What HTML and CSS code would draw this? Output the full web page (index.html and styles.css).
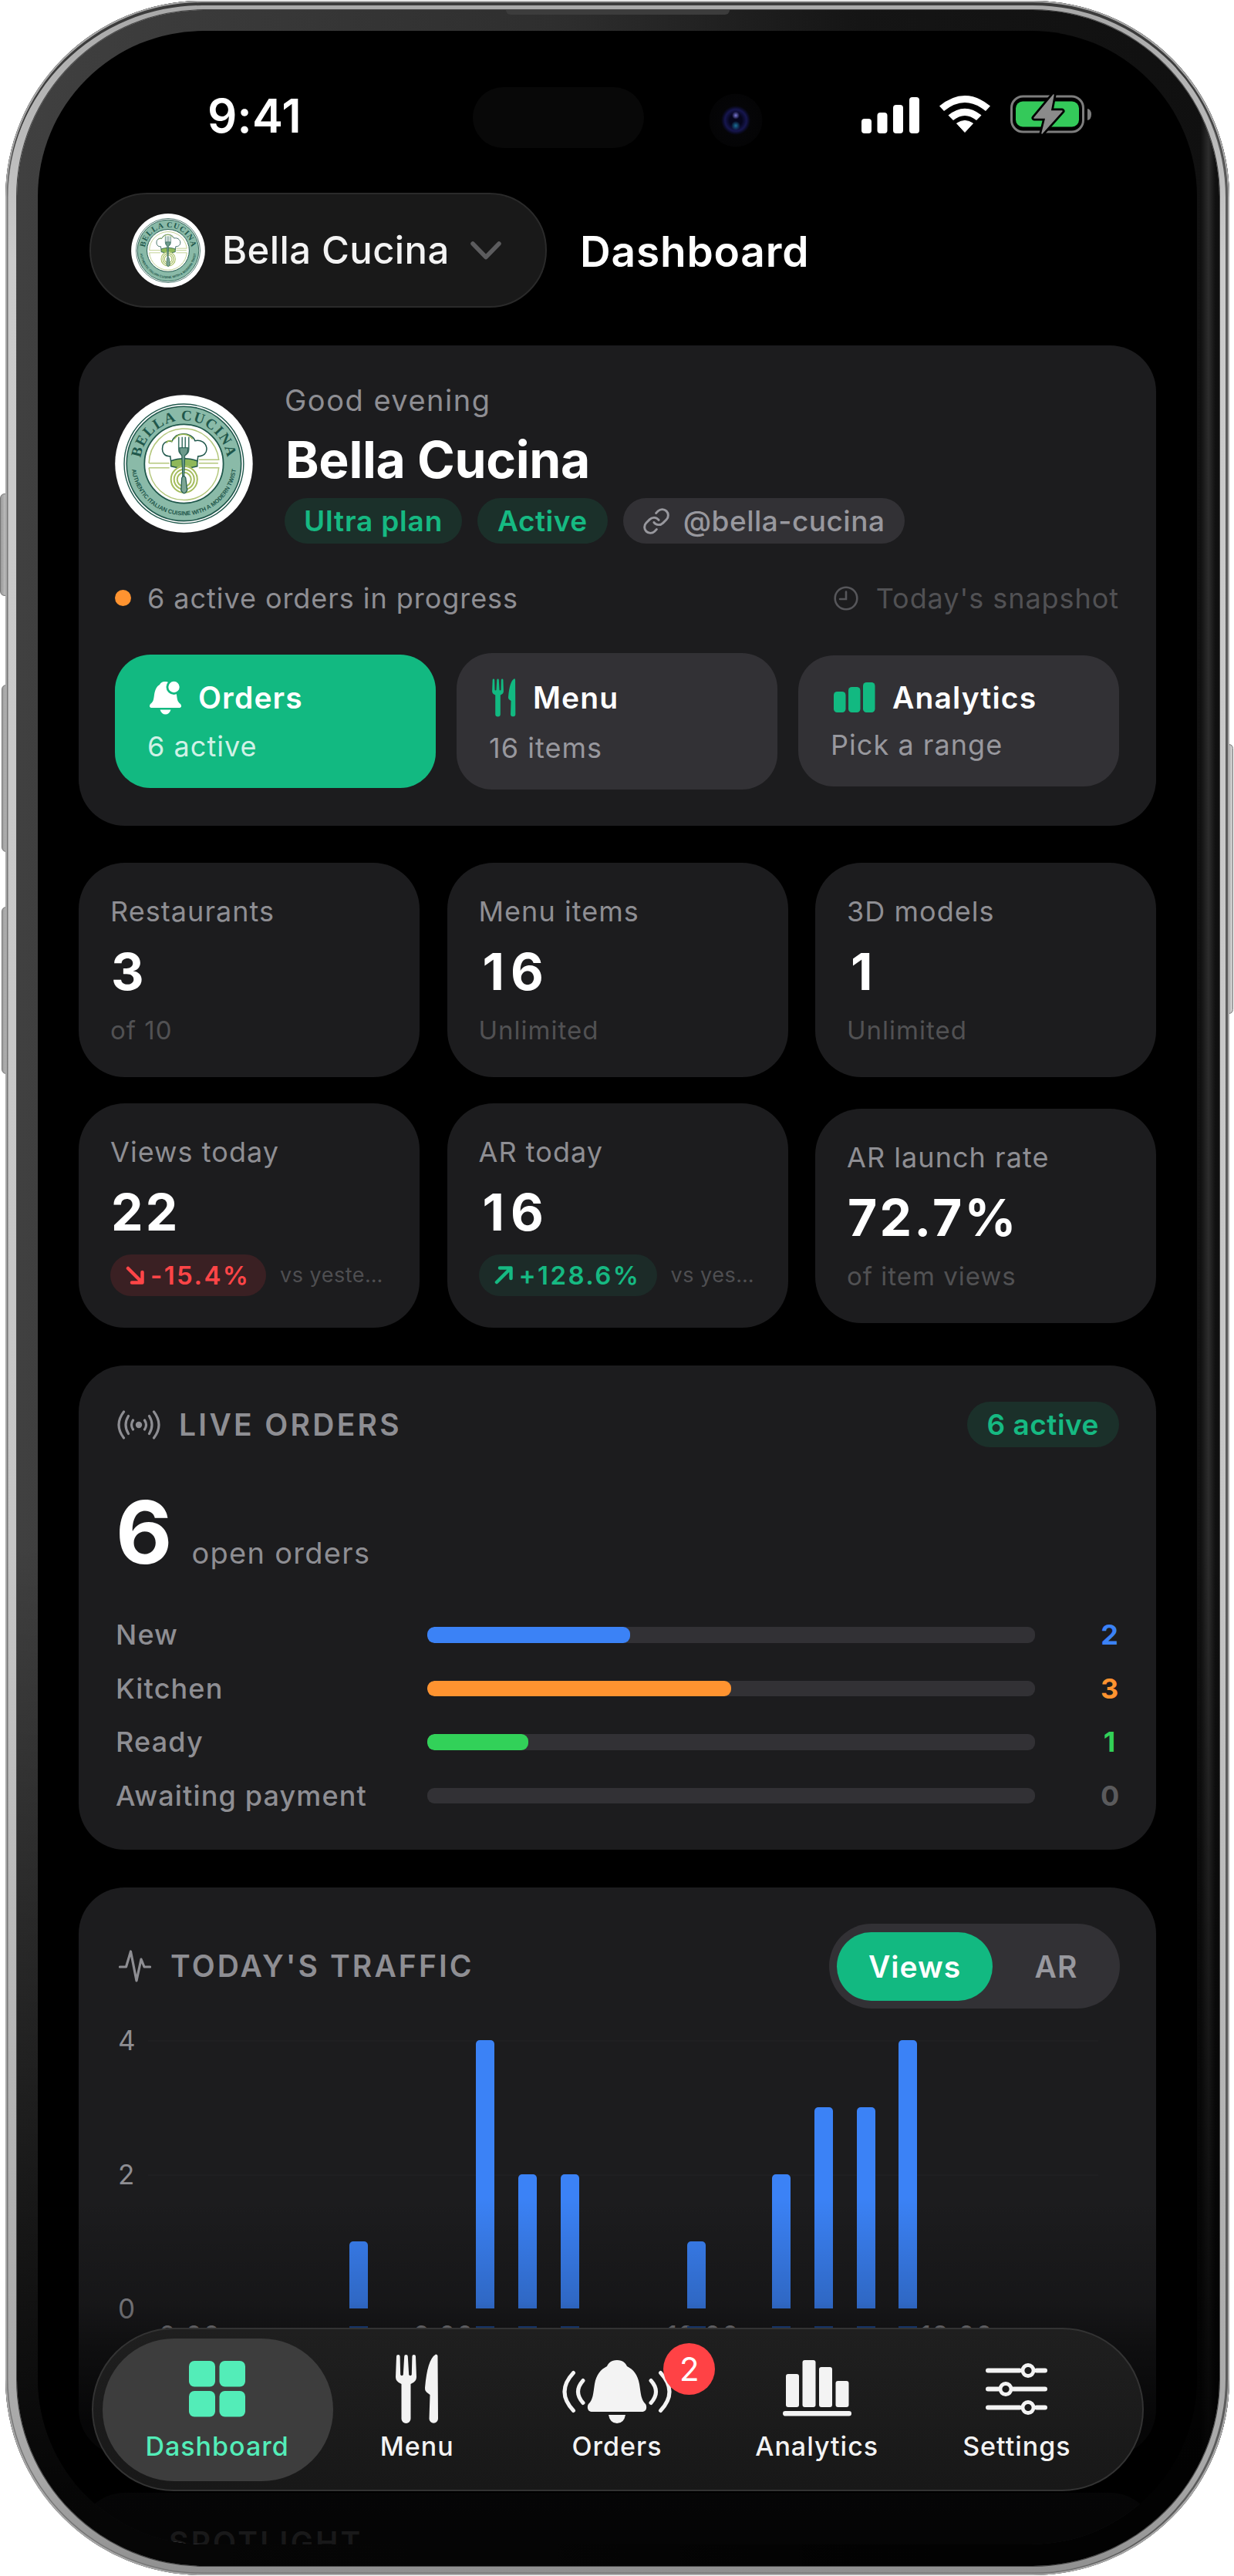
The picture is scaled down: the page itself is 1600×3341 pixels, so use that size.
FILE: index.html
```html
<!DOCTYPE html>
<html lang="en">
<head>
<meta charset="utf-8">
<title>Bella Cucina – Dashboard</title>
<link rel="stylesheet" href="styles.css">
</head>
<body>
<svg class="defs" aria-hidden="true">
  <defs>
    <path id="arc-top" d="M42.8 94A56.5 56.5 0 0 1 154.600 94"/>
    <path id="arc-bottom" d="M31.5 109A67.7 67.7 0 0 0 165.9 109"/>
    <symbol id="crest" viewBox="9.5 12.5 178.5 178.5">
      <circle cx="98.7" cy="101.7" r="89" fill="#fff"/>
      <circle cx="98.7" cy="101.7" r="77.2" fill="none" stroke="#1f574b" stroke-width="1.4"/>
      <circle cx="98.7" cy="101.7" r="74" fill="#8abaa8" stroke="#1f574b" stroke-width="1.6"/>
      <circle cx="98.7" cy="101.7" r="51" fill="#fff" stroke="#1f574b" stroke-width="1.8"/>
      <g fill="none" stroke="#b4c77c" stroke-width="1.5">
        <path d="M53.5 101A45.3 45.3 0 0 1 143.8 96.5H118M53.5 101H80M53.5 107A45.3 45.3 0 0 0 143.8 107H118M53.5 107H80M118 101H143"/>
      </g>
      <path d="M82 99l-1-7c-7 1-11-5-10-11 0-6 6-10 12-8 3-7 9-10 15-10s13 3 15 9c8-2 14 3 15 9 1 7-4 11-11 11l-1 7z" fill="#fff" stroke="#1f574b" stroke-width="1.5"/>
      <path d="M76 75c3-5 6-3 8-2M86 70c5-8 18-9 24 0" fill="none" stroke="#9dbb55" stroke-width="1.6"/>
      <path d="M82 98c10-4 24-4 34 0v7c-10 3-24 3-34 0z" fill="#8fb85a" stroke="#1f574b" stroke-width="1.4"/>
      <circle cx="99" cy="122" r="18" fill="#fff"/>
      <g fill="none" stroke="#a5bd5e" stroke-width="2">
        <circle cx="99" cy="122" r="17"/><circle cx="99" cy="122" r="13"/><circle cx="99" cy="122" r="9"/>
      </g>
      <path d="M92 67v16q0 6 6.500 8 6.500-2 6.500-8V67M96.500 67v15M100.500 67v15" fill="none" stroke="#44786b" stroke-width="1.600"/>
      <path d="M93 81h11q0 8-4 10l-1 27h-2l-1-27q-3-2-3-10z" fill="#6c9a8b" stroke="#1f574b" stroke-width="1"/>
      <path d="M96 120q2.500-5 5 0l2 16q-4 8-8 0z" fill="#7ea694" stroke="#1f574b" stroke-width="1.200"/>
      <text class="crest-name"><textPath href="#arc-top" textLength="160">BELLA CUCINA</textPath></text>
      <text class="crest-motto"><textPath href="#arc-bottom" textLength="196">AUTHENTIC ITALIAN CUISINE WITH A MODERN TWIST</textPath></text>
    </symbol>
    <symbol id="cutlery" viewBox="0 0 56 91">
      <path d="M1 3.200A2.300 2.300 0 0 1 5.600 3.200L6.200 27A2 2 0 0 0 9.800 27L11.200 3.200A2.300 2.300 0 0 1 15.800 3.200L17.200 27A2 2 0 0 0 20.800 27L21.400 3.200A2.300 2.300 0 0 1 26 3.200L27 30Q27 36 19.500 39V84A6 6 0 0 1 7.500 84V39Q0 36 0 30Z"/>
      <path d="M54.500 3Q54.500 .5 52 .5Q41 7 38 44Q37.500 47 40 49.500L44.500 53L43.500 84A5.700 5.700 0 0 0 55 84Z"/>
    </symbol>
  </defs>
</svg>

<div class="device">
  <i class="side-key key-action"></i>
  <i class="side-key key-up"></i>
  <i class="side-key key-down"></i>
  <i class="side-key key-power"></i>
  <div class="frame">
    <div class="bezel">
      <i class="earpiece"></i>
      <main class="screen">

        <div class="status-bar">
          <span class="time">9:41</span>
          <span class="island"></span>
          <span class="camera"></span>
          <svg class="signal" viewBox="0 0 75 48" width="75" height="48" fill="#fff">
            <rect x="0" y="29" width="13" height="19" rx="4"/><rect x="20.500" y="21" width="13" height="27" rx="4"/>
            <rect x="41" y="11" width="13" height="37" rx="4"/><rect x="62" y="1" width="13" height="47" rx="4"/>
          </svg>
          <svg class="wifi" viewBox="0 0 66 48" width="66" height="48" fill="#fff">
            <path d="M0 13.500Q33-13.500 66 13.500L60 20Q33-2 6 20Z"/>
            <path d="M11.500 25.500Q33 8 54.500 25.500L48 32Q33 20 18 32Z"/>
            <path d="M22.500 36Q33 29 43.500 36L33 47.500Z" stroke="#fff" stroke-linejoin="round"/>
          </svg>
          <svg class="battery" viewBox="0 0 106 52" width="106" height="52">
            <rect x="1.500" y="3" width="93" height="46" rx="15" fill="none" stroke="#7d7d7d" stroke-width="3"/>
            <path d="M100 19q5 1 5 7.500t-5 7.500z" fill="#7d7d7d"/>
            <rect x="7" y="9.500" width="82" height="33" rx="9" fill="#34c95a"/>
            <path d="M56 1L31 31h15l-5 20 26-29H52z" fill="#8b8b8b" stroke="#000" stroke-width="7" stroke-linejoin="round"/>
            <path d="M56 1L31 31h15l-5 20 26-29H52z" fill="#8b8b8b" stroke="#8b8b8b" stroke-width="1.500" stroke-linejoin="round"/>
          </svg>
        </div>

        <header class="top-bar">
          <button class="switcher">
            <svg class="switcher-logo"><use href="#crest"/></svg>
            <span class="switcher-name">Bella Cucina</span>
            <svg class="chevron" viewBox="0 0 40 24" width="40" height="24"><path d="M3 3L20 20.500L37 3" fill="none" stroke="#5c5c5e" stroke-width="5.500" stroke-linecap="round" stroke-linejoin="round"/></svg>
          </button>
          <h1 class="page-title">Dashboard</h1>
        </header>

        <section class="card hero">
          <div class="identity">
            <svg class="hero-logo"><use href="#crest"/></svg>
            <div class="identity-text">
              <p class="greeting">Good evening</p>
              <h2 class="name">Bella Cucina</h2>
              <div class="tags">
                <span class="tag green plan">Ultra plan</span>
                <span class="tag green">Active</span>
                <span class="tag grey">
                  <svg viewBox="1 1 22 22" width="34" height="34" fill="none" stroke="#98989e" stroke-width="1.900" stroke-linecap="round" stroke-linejoin="round">
                    <path d="M10 13a5 5 0 0 0 7.540.540l3-3a5 5 0 0 0-7.070-7.070l-1.720 1.710"/>
                    <path d="M14 11a5 5 0 0 0-7.540-.540l-3 3a5 5 0 0 0 7.070 7.070l1.710-1.710"/>
                  </svg>
                  <span class="handle">@bella-cucina</span>
                </span>
              </div>
            </div>
          </div>
          <div class="summary">
            <i class="dot"></i>
            <span class="summary-text">6 active orders in progress</span>
            <svg class="clock" viewBox="0 0 32 32" width="32" height="32" fill="none" stroke="#56565a" stroke-width="2.600" stroke-linecap="round"><circle cx="16" cy="16" r="14.300"/><path d="M16 7.500V17H8"/></svg>
            <span class="snapshot">Today's snapshot</span>
          </div>
          <div class="actions">
            <div class="action primary">
              <div class="action-head head-orders">
                <svg viewBox="0 0 41 44" width="41" height="44" fill="#fff">
                  <path d="M20 1c4 0 6 2 7 4 5 2 7 7 8 13 1 7 1 9 5 12 2 3 1 5-2 5H3c-3 0-4-2-2-5 4-3 4-5 5-12 1-6 3-11 7-13 1-2 3-4 7-4z"/>
                  <path d="M13.500 37.500h14q-2 6-7 6t-7-6z"/>
                  <circle cx="31.500" cy="8" r="10" fill="#12b981"/><circle cx="31.500" cy="8" r="7.200"/>
                </svg>
                <span>Orders</span>
              </div>
              <p class="action-sub">6 active</p>
            </div>
            <div class="action">
              <div class="action-head head-menu">
                <svg width="31" height="50" fill="#12b981"><use href="#cutlery"/></svg>
                <span>Menu</span>
              </div>
              <p class="action-sub">16 items</p>
            </div>
            <div class="action">
              <div class="action-head head-analytics">
                <svg viewBox="0 0 54 39" width="54" height="39" fill="#12b981"><rect y="12" width="15.500" height="27" rx="4.500"/><rect x="19" y="6" width="15.500" height="33" rx="4.500"/><rect x="38" width="15.500" height="39" rx="4.500"/></svg>
                <span>Analytics</span>
              </div>
              <p class="action-sub">Pick a range</p>
            </div>
          </div>
        </section>

        <section class="stats">
          <div class="card stat"><p class="stat-label">Restaurants</p><p class="stat-value">3</p><p class="stat-sub">of 10</p></div>
          <div class="card stat"><p class="stat-label">Menu items</p><p class="stat-value inset">16</p><p class="stat-sub">Unlimited</p></div>
          <div class="card stat"><p class="stat-label">3D models</p><p class="stat-value inset">1</p><p class="stat-sub">Unlimited</p></div>
          <div class="card stat">
            <p class="stat-label">Views today</p><p class="stat-value">22</p>
            <div class="trend">
              <span class="delta down"><svg viewBox="0 0 24 24" width="24" height="24"><path d="M3 3L21 21M8 21.500H21.500V8"/></svg>-15.4%</span>
              <span class="versus">vs yeste…</span>
            </div>
          </div>
          <div class="card stat">
            <p class="stat-label">AR today</p><p class="stat-value inset">16</p>
            <div class="trend">
              <span class="delta up"><svg viewBox="0 0 24 24" width="24" height="24"><path d="M3 21L21 3M7 2.500H21.500V16"/></svg>+128.6%</span>
              <span class="versus">vs yes…</span>
            </div>
          </div>
          <div class="card stat"><p class="stat-label">AR launch rate</p><p class="stat-value">72.7%</p><p class="stat-sub">of item views</p></div>
        </section>

        <section class="card live">
          <div class="card-head">
            <svg viewBox="0 0 56 38" width="56" height="38" fill="none" stroke="#8e8e93" stroke-width="3.200" stroke-linecap="round">
              <circle cx="28" cy="19" r="4.200" fill="#8e8e93" stroke="none"/>
              <path d="M20.500 13q-4 6 0 12M14.500 7.500q-7 11.500 0 23M8.500 2q-13 17 0 34M35.500 13q4 6 0 12M41.500 7.500q7 11.500 0 23M47.500 2q13 17 0 34"/>
            </svg>
            <h3 class="card-title">LIVE ORDERS</h3>
            <span class="tag green live-tag">6 active</span>
          </div>
          <div class="open"><span class="open-count">6</span><span class="open-label">open orders</span></div>
          <div class="stages">
            <div class="stage"><span class="stage-name">New</span><div class="track"><div class="fill blue" style="width:33.33%"></div></div><span class="stage-count c-blue">2</span></div>
            <div class="stage"><span class="stage-name">Kitchen</span><div class="track"><div class="fill orange" style="width:50%"></div></div><span class="stage-count c-orange">3</span></div>
            <div class="stage"><span class="stage-name">Ready</span><div class="track"><div class="fill lime" style="width:16.67%"></div></div><span class="stage-count c-lime">1</span></div>
            <div class="stage"><span class="stage-name">Awaiting payment</span><div class="track"></div><span class="stage-count c-none">0</span></div>
          </div>
        </section>

        <section class="card traffic">
          <div class="card-head">
            <svg viewBox="0 0 42 44" width="42" height="44" fill="none" stroke="#8e8e93" stroke-width="3.200" stroke-linecap="round" stroke-linejoin="round"><path d="M1.500 23H9.500L15.500 3L23 41L29 13L33 23H40.500"/></svg>
            <h3 class="card-title traffic-title">TODAY'S TRAFFIC</h3>
            <div class="toggle"><span class="option selected">Views</span><span class="option">AR</span></div>
          </div>
          <div class="chart">
            <div class="y-axis"><span>4</span><span>2</span><span>0</span></div>
            <div class="plot">
              <i></i><i></i><i></i><i></i><i></i>
              <b style="height:25%"></b><i></i><i></i>
              <b style="height:100%"></b><b style="height:50%"></b><b style="height:50%"></b><i></i><i></i>
              <b style="height:25%"></b><i></i>
              <b style="height:50%"></b><b style="height:75%"></b><b style="height:75%"></b><b style="height:100%"></b>
            </div>
          </div>
          <div class="x-axis"><span>0:00</span><span>6:00</span><span>12:00</span><span>18:00</span></div>
        </section>

        <section class="card spotlight"><h3 class="card-title">SPOTLIGHT</h3></section>

        <div class="scrim"></div>

        <nav class="tab-bar">
          <a class="tab active">
            <svg viewBox="0 0 73 73" width="73" height="91" fill="#53edb8"><rect width="34" height="33.500" rx="7"/><rect x="39.500" width="33.500" height="33.500" rx="7"/><rect y="39" width="34" height="33.500" rx="7"/><rect x="39.500" y="39" width="33.500" height="33.500" rx="7"/></svg>
            <span>Dashboard</span>
          </a>
          <a class="tab">
            <svg width="56" height="91" fill="#f3f3f3"><use href="#cutlery"/></svg>
            <span>Menu</span>
          </a>
          <a class="tab">
            <svg viewBox="0 -8 142 91" width="142" height="91" fill="#f3f3f3">
              <path d="M71 0c8 0 11 4 13 8 8 4 14 11 16 23 2 13 2 20 8 26 2 3 2 10-5 10H39c-7 0-7-7-5-10 6-6 6-13 8-26 2-12 8-19 16-23 2-4 5-8 13-8z"/>
              <path d="M60 71h22q-2 11-11 11t-11-11z"/>
              <path d="M14.500 16.500q-23 24.500 0 49M27 26.500q-13 14.500 0 29M127.500 16.500q23 24.500 0 49M115 26.500q13 14.500 0 29" fill="none" stroke="#f3f3f3" stroke-width="5" stroke-linecap="round"/>
            </svg>
            <span>Orders</span>
            <em class="badge">2</em>
          </a>
          <a class="tab">
            <svg viewBox="0 0 89 75" width="89" height="91" fill="#f3f3f3"><rect x="4" y="18" width="17" height="43" rx="3"/><rect x="25.500" width="17" height="61" rx="3"/><rect x="47" y="9" width="17" height="52" rx="3"/><rect x="68.500" y="27" width="17" height="34" rx="3"/><rect y="66" width="89" height="6.500" rx="3.200"/></svg>
            <span>Analytics</span>
          </a>
          <a class="tab">
            <svg viewBox="0 0 80 70" width="80" height="91" fill="none" stroke="#f3f3f3" stroke-width="6" stroke-linecap="round"><path d="M3 11H44M66 11H77M3 35H16M36 35H77M3 59H44M66 59H77"/><g stroke-width="4.800"><circle cx="55" cy="11" r="7"/><circle cx="26" cy="35" r="7"/><circle cx="55" cy="59" r="7"/></g></svg>
            <span>Settings</span>
          </a>
        </nav>
      </main>
    </div>
  </div>
</div>
</body>
</html>
```
FILE: styles.css
```css
* { box-sizing: border-box; margin: 0; padding: 0; }

body {
  width: 1600px;
  background: #fff;
  color: #fff;
  font-family: Inter, "Liberation Sans", sans-serif;
}

h1, h2, h3 { font-weight: 600; }
svg { display: block; flex: none; }
.defs { position: absolute; width: 0; height: 0; }
.crest-name { font: 700 19px "Liberation Serif", serif; fill: #1f574b; }
.crest-motto { font: 600 7.6px "Liberation Sans", sans-serif; fill: #1f574b; }

/* Device shell */
.device { position: relative; height: 3341px; padding: 1px 6px 1px 7px; overflow: hidden; }
.frame {
  position: relative;
  height: 3339px;
  padding: 12px 13px 12px 15px;
  border-radius: 255px;
  background: linear-gradient(180deg, #a8a8a8 0, #cbcbcb 10%, #c6c6c6 60%, #a8a8a8 96%, #8f8f8f);
  box-shadow:
    inset 0 0 0 2px #a9a9a9,
    inset 0 4px 0 2px #3c3c3c,
    inset -3px 0 0 2px #5c5c5c,
    inset 0 0 0 3.500px #777;
}
.bezel {
  position: relative;
  height: 3315px;
  padding: 27px 29px 28px 27px;
  border-radius: 242px;
  background:
    linear-gradient(180deg, transparent 60%, rgba(0, 0, 0, .9) 97%),
    linear-gradient(90deg, transparent calc(100% - 24px), #2d2d2d calc(100% - 14px), transparent calc(100% - 5px)),
    linear-gradient(90deg, #404040 0, #2e2e2e 45%, #151515 70%, #101010);
  box-shadow: 0 0 0 1px #444;
}
.earpiece {
  position: absolute; top: 0; left: 634px; width: 290px; height: 6px;
  background: #3c3c3c; border-radius: 0 0 8px 8px;
}
.side-key { position: absolute; background: linear-gradient(90deg, #9a9a9a, #d2d2d2); border: 1.500px solid #777; border-radius: 6px; }
.key-action { left: 0; top: 640px; width: 12px; height: 133px; }
.key-up { left: 2px; top: 888px; width: 12px; height: 217px; }
.key-down { left: 2px; top: 1176px; width: 12px; height: 217px; }
.key-power { left: 1588px; top: 965px; width: 11px; height: 350px; }

.screen {
  position: relative;
  width: 1503px;
  height: 3260px;
  padding: 0 53px;
  border-radius: 215px;
  background: #000;
  overflow: hidden;
}

/* Status bar */
.status-bar { display: flex; align-items: center; height: 210px; padding: 9px 0 0 167px; }
.time { width: 344px; font-size: 60px; font-weight: 600; letter-spacing: .2px; line-height: 60px; }
.island { width: 222px; height: 79px; margin-top: 6px; border-radius: 40px; background: #080808; }
.camera {
  width: 70px; height: 70px; margin: 13px 0 0 84px; border-radius: 50%;
  background:
    radial-gradient(circle at 50% 41%, #7a78d8 0, transparent 5px),
    radial-gradient(circle at 50% 60%, #1c6f9c 0, transparent 6px),
    radial-gradient(circle, #05051c 8px, #16164e 14px, #0a0a22 17px, #050507 19px, #040405 34px, #000 35px);
}
.signal { margin: -2px 0 0 128px; }
.wifi { margin: -3px 0 0 26px; }
.battery { margin: -4px 0 0 26px; }

/* Header */
.top-bar { display: flex; align-items: center; gap: 43px; padding-left: 14px; height: 149px; }
.switcher {
  display: flex; align-items: center;
  width: 593px; height: 149px; padding-left: 52px;
  border: 2px solid #2a2a2a; border-radius: 75px;
  background: #191919; color: #f3f3f3; font: inherit;
}
.switcher-logo { width: 96px; height: 96px; }
.switcher-name { width: 322px; margin-left: 22px; text-align: left; white-space: nowrap; font-size: 49px; font-weight: 500; letter-spacing: .4px; }
.page-title { font-size: 55px; line-height: 60px; padding-top: 2px; letter-spacing: .8px; }

/* Cards */
.card { border-radius: 60px; background: #1c1c1e; }

.hero { height: 623px; margin-top: 49px; padding: 50.500px 48px 0 47px; }
.identity { display: flex; align-items: center; gap: 41px; }
.hero-logo { width: 179px; height: 179px; }
.greeting { margin-top: -2px; font-size: 38px; line-height: 44px; color: #8e8e93; letter-spacing: 1.500px; }
.name { margin: 15px 0 0 1px; font-size: 66px; line-height: 80px; font-weight: 700; letter-spacing: -.300px; }
.tags { display: flex; gap: 20px; margin-top: 10.500px; }
.tag { display: flex; align-items: center; height: 59px; padding: 0 26px; border-radius: 30px; font-size: 37px; line-height: 59px; white-space: nowrap; letter-spacing: .5px; }
.tag.green { background: #1b302a; color: #16b982; font-weight: 600; }
.tag.plan { letter-spacing: .8px; padding: 0 25px; }
.tag.grey { background: #323135; color: #98989e; font-weight: 500; gap: 18px; }

.summary { display: flex; align-items: center; height: 44px; margin-top: 48.500px; font-size: 36px; color: #8e8e93; letter-spacing: .950px; }
.dot { width: 21px; height: 21px; border-radius: 50%; background: #ff9330; }
.summary-text { margin-left: 21px; }
.clock { margin-left: auto; }
.snapshot { margin-left: 23px; color: #515154; }

.actions { display: flex; align-items: center; gap: 27px; margin-top: 49px; }
.action { flex: 1; padding: 32px 42px; border-radius: 46px; background: #323135; }
.action.primary { background: #12b981; }
.action-head { display: flex; align-items: center; gap: 22px; font-size: 39px; font-weight: 600; letter-spacing: 1.150px; }
.head-orders { height: 48px; padding-left: 3px; }
.head-menu { height: 52px; padding-left: 4px; }
.head-analytics { height: 45px; padding-left: 4px; }
.action-sub { margin-top: 17px; font-size: 36px; line-height: 44px; color: #98989e; letter-spacing: 1.050px; }
.primary .action-sub { color: #d0f1e6; }

/* Stat grid */
.stats { display: grid; grid-template-columns: repeat(3, 442px); justify-content: space-between; align-items: center; row-gap: 34px; margin-top: 48px; }
.stat { padding: 41px; }
.stat-label { font-size: 36px; line-height: 44px; color: #8e8e93; white-space: nowrap; letter-spacing: 1.050px; }
.stat-value { margin-top: 16px; padding-left: 1px; font-size: 66px; line-height: 80px; font-weight: 700; letter-spacing: 3.200px; }
.stat-value.inset { padding-left: 5px; letter-spacing: 8px; }
.stat-sub { margin-top: 16px; font-size: 33px; line-height: 40px; color: #515153; letter-spacing: 1px; }
.trend { display: flex; align-items: center; margin-top: 15px; }
.delta { display: flex; align-items: center; gap: 8px; height: 54px; padding-left: 20px; border-radius: 27px; font-size: 33px; font-weight: 600; white-space: nowrap; letter-spacing: 2.400px; }
.delta path { fill: none; stroke: currentColor; stroke-width: 4.500; stroke-linecap: round; stroke-linejoin: round; }
.delta.down { width: 202px; background: #3a2023; color: #ff4547; }
.delta.up { width: 231px; background: #1c2b28; color: #16b982; }
.versus { margin-left: 18px; font-size: 27px; line-height: 40px; color: #4e4e51; white-space: nowrap; letter-spacing: .500px; }

/* Live orders */
.card-head { display: flex; align-items: center; }
.card-title { font-size: 39px; line-height: 44px; color: #8e8e93; letter-spacing: 3.300px; white-space: nowrap; }
.live { height: 628.500px; margin-top: 48.500px; padding: 47.500px 48px 0 48px; }
.live .card-head svg { margin-left: 2px; }
.live .card-title { margin-left: 24px; }
.live-tag { margin-left: auto; }
.open { display: flex; align-items: baseline; height: 100px; margin-top: 60px; line-height: 100px; }
.open-count { font-size: 113px; font-weight: 700; }
.open-label { margin-left: 25px; font-size: 38px; color: #8e8e93; letter-spacing: 1.300px; }
.stages { display: flex; flex-direction: column; gap: 25.500px; margin-top: 61.500px; }
.stage { display: flex; align-items: center; height: 44px; font-size: 36px; font-weight: 500; }
.stage-name { width: 404px; margin-top: -1px; color: #8e8e93; white-space: nowrap; letter-spacing: 1.150px; }
.track { width: 788px; height: 20.500px; border-radius: 9px; background: #323135; overflow: hidden; }
.fill { height: 100%; border-radius: 9px; }
.stage-count { width: 23px; margin: -1px 1px 0 auto; text-align: center; font-weight: 700; }
.blue { background: #3b82f6; }
.orange { background: #ff9330; }
.lime { background: #32d159; }
.c-blue { color: #3b82f6; }
.c-orange { color: #ff9330; }
.c-lime { color: #32d159; }
.c-none { color: #5a5a5c; }

/* Traffic chart */
.traffic { height: 737px; margin-top: 48.500px; padding: 47.500px 47px 0 50px; }
.traffic .card-head svg { margin-left: 2px; }
.traffic-title { margin-left: 25px; letter-spacing: 3.100px; }
.toggle { display: flex; width: 377px; height: 110px; margin-left: auto; padding: 10.500px 0 10.500px 10px; border-radius: 55px; background: #323135; }
.option { flex: 1; text-align: center; line-height: 89px; font-size: 39px; font-weight: 600; letter-spacing: 1px; color: #98989e; }
.option.selected { flex: 0 0 202px; border-radius: 45px; background: #12b981; color: #fff; }
.chart { display: flex; height: 348px; margin-top: 41px; }
.y-axis { display: flex; flex-direction: column; justify-content: space-between; width: 39px; margin: -20px 0; padding-left: 1px; font-size: 35px; line-height: 40px; color: #8e8e93; }
.plot {
  display: grid; grid-template-columns: repeat(24, 54.800px); align-items: end; justify-items: center;
  width: 1260px; margin-left: -27.400px;
  background: linear-gradient(#1f1f21, #1f1f21) 28px 0 / 1232px 2px no-repeat, linear-gradient(#1f1f21, #1f1f21) 28px 174px / 1232px 2px no-repeat;
}
.plot b { position: relative; width: 24px; border-radius: 5px 5px 0 0; background: #3b82f6; }
.plot b::after { content: ""; position: absolute; left: 0; right: 0; bottom: -25px; height: 2px; background: #21509f; }
.x-axis { display: grid; grid-template-columns: repeat(4, 329px); margin: 15px 0 0 54px; font-size: 35px; line-height: 40px; color: #8e8e93; white-space: nowrap; letter-spacing: 1px; }
.spotlight { height: 300px; margin-top: 48px; padding: 43px 0 0 117px; }

.scrim {
  position: absolute; left: 0; right: 0; bottom: 0; height: 450px;
  background: linear-gradient(180deg, transparent 0, rgba(0, 0, 0, .2) 30%, rgba(0, 0, 0, .5) 45%, rgba(0, 0, 0, .78) 65%, rgba(0, 0, 0, .83));
}

/* Tab bar floats over the scrolled content */
.tab-bar {
  position: absolute; left: 70px; top: 2979px; width: 1364px; height: 212px;
  display: flex; padding: 0 33px 0 31px;
  border: 2px solid #333; border-radius: 106px;
  background: linear-gradient(180deg, #1f1f1f, #181818);
}
.tab { position: relative; flex: 1; display: flex; flex-direction: column; align-items: center; padding-top: 32px; font-size: 34px; line-height: 40px; font-weight: 500; color: #f3f3f3; letter-spacing: 1px; }
.tab span { position: relative; margin-top: 9px; }
.tab svg { position: relative; }
.tab.active { color: #53edb8; }
.tab.active::before { content: ""; position: absolute; left: -19px; right: -21px; top: 12px; height: 185px; border-radius: 93px; background: #3d3d3d; }
.badge { position: absolute; left: 190px; top: 18px; width: 67px; height: 67px; border-radius: 50%; background: #ff4245; color: #fff; font-style: normal; font-weight: 400; font-size: 42px; line-height: 67px; text-align: center; letter-spacing: 0; }
```
